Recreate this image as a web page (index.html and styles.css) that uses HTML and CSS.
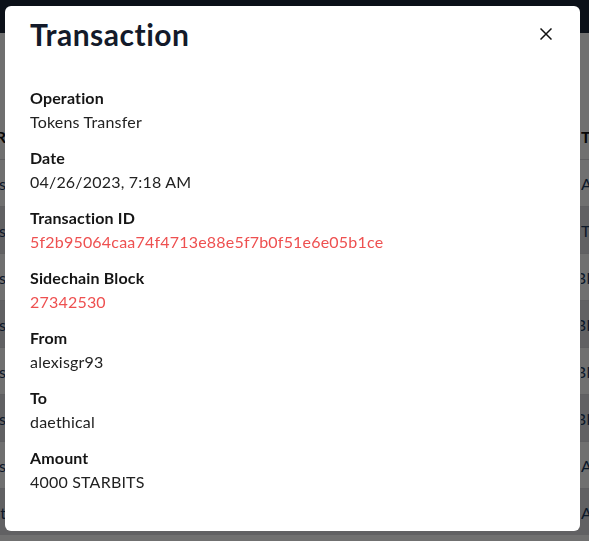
FILE: index.html
```html
<!DOCTYPE html>
<html lang="en">
<head>
<meta charset="utf-8">
<title>Transaction</title>
<link rel="stylesheet" href="styles.css">
</head>
<body>
<div class="page">
  <div class="topbar"></div>
  <div class="table">
    <div class="row head"><div class="cell-left"><span>PAIR</span></div><div class="cell-right">Token</div></div>
    <div class="row"><div class="cell-left"><span>alexis</span></div><div class="cell-right">ALIVE</div></div>
    <div class="row alt"><div class="cell-left"><span>alexis</span></div><div class="cell-right">TLAND</div></div>
    <div class="row"><div class="cell-left"><span>alexis</span></div><div class="cell-right shift">STARBITS</div></div>
    <div class="row alt"><div class="cell-left"><span>alexis</span></div><div class="cell-right shift">STARBITS</div></div>
    <div class="row"><div class="cell-left"><span>alexis</span></div><div class="cell-right shift">STARBITS</div></div>
    <div class="row alt"><div class="cell-left"><span>alexis</span></div><div class="cell-right shift">STARBITS</div></div>
    <div class="row"><div class="cell-left"><span>alexis</span></div><div class="cell-right">ALIVE</div></div>
    <div class="row alt"><div class="cell-left"><span>daet</span></div><div class="cell-right">ALIVE</div></div>
  </div>
</div>
<div class="overlay">
  <div class="modal" role="dialog" aria-labelledby="modal-title">
    <div class="modal-header">
      <h1 id="modal-title" class="modal-title">Transaction</h1>
      <button class="close" aria-label="Close">
        <svg width="12" height="12" viewBox="0 0 12 12"><path d="M0.5 0.5 L11.5 11.5 M11.5 0.5 L0.5 11.5" stroke="#111" stroke-width="1.5" fill="none"/></svg>
      </button>
    </div>
    <dl class="details">
      <div class="item"><dt>Operation</dt><dd>Tokens Transfer</dd></div>
      <div class="item"><dt>Date</dt><dd>04/26/2023, 7:18 AM</dd></div>
      <div class="item"><dt>Transaction ID</dt><dd class="link">5f2b95064caa74f4713e88e5f7b0f51e6e05b1ce</dd></div>
      <div class="item"><dt>Sidechain Block</dt><dd class="link">27342530</dd></div>
      <div class="item"><dt>From</dt><dd>alexisgr93</dd></div>
      <div class="item"><dt>To</dt><dd>daethical</dd></div>
      <div class="item"><dt>Amount</dt><dd>4000 STARBITS</dd></div>
    </dl>
  </div>
</div>
</body>
</html>
```
FILE: styles.css
```css
html, body {
  margin: 0;
  padding: 0;
}
body {
  font-family: Lato, "Noto Sans", sans-serif;
  background: #ffffff;
  overflow: hidden;
}
.page {
  width: 589px;
  height: 541px;
}
.topbar {
  height: 33px;
  background: #1a2638;
}
.table {
  margin-top: 80px;
  display: flex;
  flex-direction: column;
}
.row {
  height: 46px;
  display: flex;
  align-items: center;
  justify-content: space-between;
  border-top: 1px solid #d8d8dc;
  font-size: 16px;
  color: #1d3a5f;
}
.row.alt {
  background: #dddee2;
}
.row.head {
  font-weight: 700;
  color: #111;
  border-top: none;
}
.cell-left {
  width: 6px;
  display: flex;
  justify-content: flex-end;
  overflow: hidden;
  white-space: nowrap;
}
.cell-right {
  width: 8px;
  overflow: hidden;
  white-space: nowrap;
}
.cell-right.shift {
  text-indent: -43px;
}
.overlay {
  position: fixed;
  inset: 0;
  background: rgba(0, 0, 0, 0.56);
  padding: 6px 9px 10px 5px;
  display: flex;
}
.modal {
  flex: 1;
  background: #ffffff;
  border-radius: 6px;
  display: flex;
  flex-direction: column;
}
.modal-header {
  height: 56px;
  display: flex;
  align-items: center;
  justify-content: space-between;
  padding: 0 28px 0 25px;
}
.modal-title {
  margin: 0;
  font-size: 30px;
  line-height: 36px;
  font-weight: 700;
  letter-spacing: 0.5px;
  color: #131a2a;
}
.close {
  border: 0;
  background: none;
  padding: 0;
  width: 12px;
  height: 12px;
  display: flex;
}
.details {
  margin: 0;
  padding: 24px 25px 0;
  display: flex;
  flex-direction: column;
  gap: 12px;
}
.item dt {
  font-size: 16px;
  line-height: 24px;
  font-weight: 700;
  letter-spacing: 0.15px;
  color: #151515;
}
.item dd {
  margin: 0;
  font-size: 16px;
  line-height: 24px;
  letter-spacing: 0.2px;
  color: #222;
}
.item dd.link {
  color: #ee5050;
}
```
